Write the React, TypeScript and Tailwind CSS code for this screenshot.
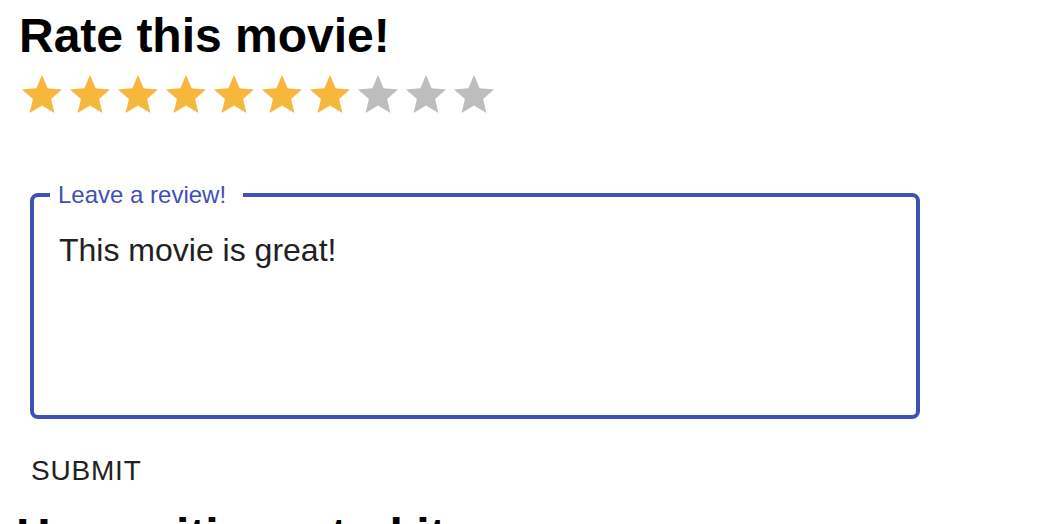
import React from "react";

const STAR = "M12 17.27L18.18 21l-1.64-7.03L22 9.24l-7.19-.61L12 2 9.19 8.63 2 9.24l5.46 4.73L5.82 21z";

function Star({ filled }: { filled: boolean }) {
  return (
    <svg width="48" height="48" viewBox="0 0 24 24" className="block shrink-0">
      <path d={STAR} fill={filled ? "#f6b73c" : "#bdbdbd"} />
    </svg>
  );
}

export default function App() {
  const rating = 7;
  return (
    <div className="bg-white w-[1050px] h-[524px] overflow-hidden font-['Liberation_Sans',Arial,sans-serif] text-black">
      <div className="pl-[16px] pt-[8px] flex flex-col">
        <h1 className="ml-[3px] text-[48px] leading-[56px] font-bold">Rate this movie!</h1>
        <div className="flex mt-[7px] pl-[2px]">
          {Array.from({ length: 10 }).map((_, i) => (
            <Star key={i} filled={i < rating} />
          ))}
        </div>
        <fieldset className="mt-[64px] ml-[14px] w-[890px] h-[236px] border-[4px] border-[#3f51b5] rounded-[8px]">
          <legend className="ml-[16px] pl-[8px] pr-[17px] text-[24px] leading-[24px] text-[#3f51b5]">
            Leave a review!
          </legend>
          <div className="pt-[20px] pl-[25px] text-[32px] leading-[46px] text-[#212121]">
            This movie is great!
          </div>
        </fieldset>
        <button className="self-start mt-[34px] px-[15px] text-[28px] leading-[36px] font-medium tracking-[0.8px] text-[#212121] uppercase">
          Submit
        </button>
        <h2 className="mt-[19px] text-[48px] leading-[56px] font-bold">How critics rated it</h2>
      </div>
    </div>
  );
}
